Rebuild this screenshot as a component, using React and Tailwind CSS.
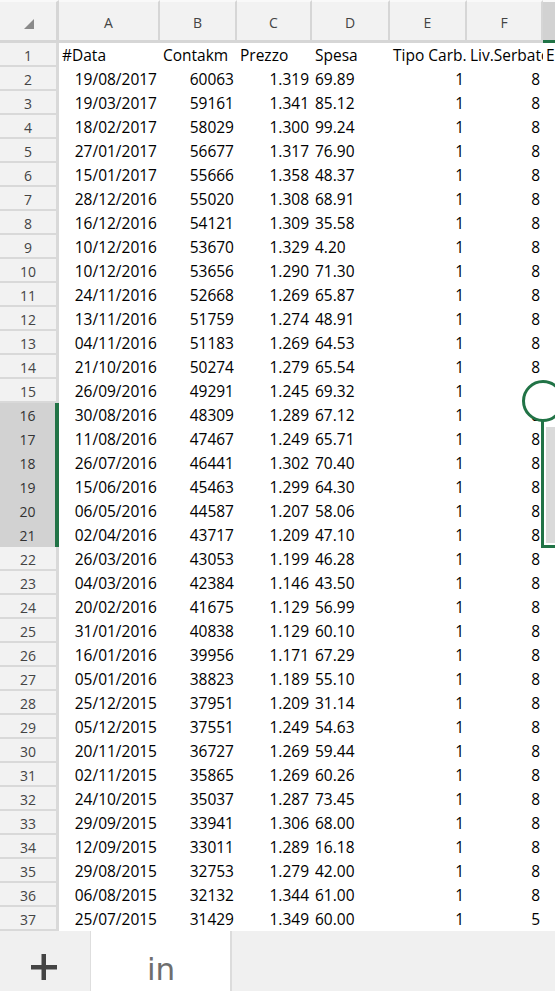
import React from "react";

const data = [
  ["19/08/2017", "60063", "1.319", "69.89", "1", "8"],
  ["19/03/2017", "59161", "1.341", "85.12", "1", "8"],
  ["18/02/2017", "58029", "1.300", "99.24", "1", "8"],
  ["27/01/2017", "56677", "1.317", "76.90", "1", "8"],
  ["15/01/2017", "55666", "1.358", "48.37", "1", "8"],
  ["28/12/2016", "55020", "1.308", "68.91", "1", "8"],
  ["16/12/2016", "54121", "1.309", "35.58", "1", "8"],
  ["10/12/2016", "53670", "1.329", "4.20", "1", "8"],
  ["10/12/2016", "53656", "1.290", "71.30", "1", "8"],
  ["24/11/2016", "52668", "1.269", "65.87", "1", "8"],
  ["13/11/2016", "51759", "1.274", "48.91", "1", "8"],
  ["04/11/2016", "51183", "1.269", "64.53", "1", "8"],
  ["21/10/2016", "50274", "1.279", "65.54", "1", "8"],
  ["26/09/2016", "49291", "1.245", "69.32", "1", "8"],
  ["30/08/2016", "48309", "1.289", "67.12", "1", "8"],
  ["11/08/2016", "47467", "1.249", "65.71", "1", "8"],
  ["26/07/2016", "46441", "1.302", "70.40", "1", "8"],
  ["15/06/2016", "45463", "1.299", "64.30", "1", "8"],
  ["06/05/2016", "44587", "1.207", "58.06", "1", "8"],
  ["02/04/2016", "43717", "1.209", "47.10", "1", "8"],
  ["26/03/2016", "43053", "1.199", "46.28", "1", "8"],
  ["04/03/2016", "42384", "1.146", "43.50", "1", "8"],
  ["20/02/2016", "41675", "1.129", "56.99", "1", "8"],
  ["31/01/2016", "40838", "1.129", "60.10", "1", "8"],
  ["16/01/2016", "39956", "1.171", "67.29", "1", "8"],
  ["05/01/2016", "38823", "1.189", "55.10", "1", "8"],
  ["25/12/2015", "37951", "1.209", "31.14", "1", "8"],
  ["05/12/2015", "37551", "1.249", "54.63", "1", "8"],
  ["20/11/2015", "36727", "1.269", "59.44", "1", "8"],
  ["02/11/2015", "35865", "1.269", "60.26", "1", "8"],
  ["24/10/2015", "35037", "1.287", "73.45", "1", "8"],
  ["29/09/2015", "33941", "1.306", "68.00", "1", "8"],
  ["12/09/2015", "33011", "1.289", "16.18", "1", "8"],
  ["29/08/2015", "32753", "1.279", "42.00", "1", "8"],
  ["06/08/2015", "32132", "1.344", "61.00", "1", "8"],
  ["25/07/2015", "31429", "1.349", "60.00", "1", "5"],
];

const headerRow = ["#Data", "Contakm", "Prezzo", "Spesa", "Tipo Carb.", "Liv.Serbatoio", "Euro"];

const colWidths = ["w-[101px]", "w-[77px]", "w-[75px]", "w-[78px]", "w-[77px]", "w-[76px]"];
const dataAlign = ["text-right", "text-right", "text-right", "text-left", "text-right", "text-right"];
const letters = ["A", "B", "C", "D", "E", "F"];

function Cell({ w, align, children }) {
  return (
    <div
      className={`${w} shrink-0 overflow-hidden whitespace-nowrap px-[3px] text-[15.5px] leading-[24px] text-black ${align}`}
    >
      {children}
    </div>
  );
}

export default function App() {
  return (
    <div className="relative flex h-[991px] w-[555px] flex-col overflow-hidden bg-white font-['Open_Sans',sans-serif]">
      {/* column header */}
      <div className="flex h-[43px] shrink-0">
        <div className="relative h-[43px] w-[59px] shrink-0 border-b-[3px] border-r-[3px] border-t-[2px] border-[#d6d6d6] border-t-[#f9f9f9] bg-[#f2f2f2]">
          <svg className="absolute left-[23px] top-[16px]" width="12" height="12" viewBox="0 0 12 12">
            <polygon points="11,1 11,11 1,11" fill="#8a8a8a" />
          </svg>
        </div>
        {letters.map((l, i) => (
          <div
            key={l}
            className={`${colWidths[i]} flex h-[43px] shrink-0 items-center justify-center border-b-[3px] border-r-[2px] border-t-[2px] border-[#d6d6d6] border-t-[#f9f9f9] bg-[#f2f2f2] pt-[4px] text-[14px] leading-none text-[#444]`}
          >
            {l}
          </div>
        ))}
        <div className="h-[43px] flex-1 border-b-[3px] border-t-[2px] border-b-[#217346] border-t-[#f9f9f9] bg-[#d2d2d2]" />
      </div>

      {/* rows */}
      {[headerRow, ...data].map((row, r) => {
        const n = r + 1;
        const sel = n >= 16 && n <= 21;
        return (
          <div key={n} className="flex h-[24px] shrink-0">
            <div
              className={`flex h-[24px] w-[59px] shrink-0 items-center justify-center text-[14px] leading-none ${
                sel
                  ? "border-r-[4px] border-r-[#217346] bg-[#d2d2d2] pt-[1px] text-[#333]"
                  : "border-b-[2px] border-r-[3px] border-[#d9d9d9] bg-[#f2f2f2] pt-[3px] text-[#444]"
              }`}
            >
              {n}
            </div>
            {row.slice(0, 6).map((v, c) => (
              <Cell key={c} w={colWidths[c]} align={n === 1 ? "text-left" : dataAlign[c]}>
                {v}
              </Cell>
            ))}
            <Cell w="flex-1" align="text-left">
              {n === 1 ? row[6] : ""}
            </Cell>
          </div>
        );
      })}

      {/* sheet tabs */}
      <div className="flex h-[60px] shrink-0 bg-[#f0f0f0]">
        <div className="h-[60px] w-[91px] shrink-0 border-r border-[#dedede] pl-[31px] pt-[23px]">
          <svg width="26" height="26" viewBox="0 0 26 26">
            <rect x="0" y="11" width="26" height="4.5" fill="#444" />
            <rect x="10.5" y="0" width="4.5" height="26" fill="#444" />
          </svg>
        </div>
        <div className="h-[60px] w-[141px] shrink-0 border-r-[2px] border-[#dcdcdc] bg-white pl-[56px] pt-[23px] font-['DejaVu_Sans',sans-serif] text-[31px] leading-none text-[#6e6e6e]">
          in
        </div>
        <div className="flex-1" />
      </div>

      {/* selection overlay */}
      <div className="absolute left-[546px] top-[427px] h-[116px] w-[20px] bg-[#dadada]" />
      <div className="absolute left-[541px] top-[401px] h-[147px] w-[30px] border-b-[3px] border-l-[3px] border-t-[3px] border-[#217346]" />
      <div className="absolute left-[522px] top-[380px] h-[42px] w-[42px] rounded-full border-[3px] border-[#217346] bg-white" />
    </div>
  );
}
